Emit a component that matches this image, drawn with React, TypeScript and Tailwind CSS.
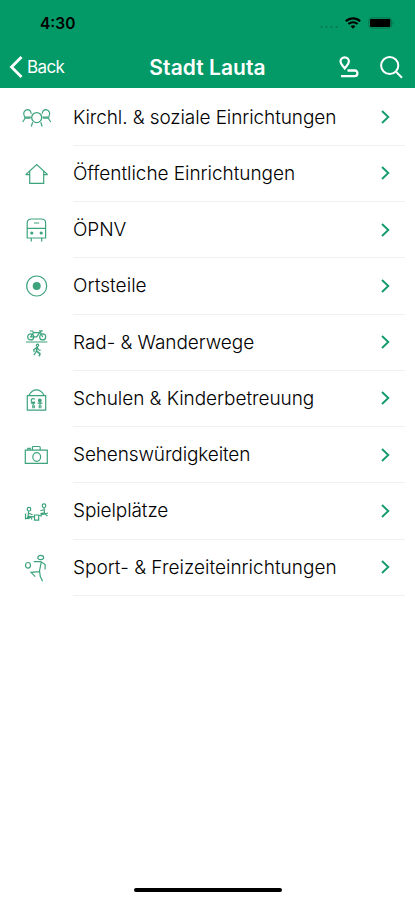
// react
import { ReactNode } from 'react';

type Category = {
  label: string;
  icon: ReactNode;
  spacing: string;
};

const categories: Category[] = [
  {
    label: 'Kirchl. & soziale Einrichtungen',
    spacing: 'tracking-[-0.1px]',
    icon: (
      <>
        <path d="M2.5 12.5C.8 9.5 2 6 5.3 5.6C7.5 5.6 9 7.5 9.2 9.8M2 13.2h7M3.2 14L.7 18M26.9 12.5c1.7-3 .5-6.5-2.8-6.9c-2.2 0-3.7 1.9-3.9 4.2M27.4 13.2h-7M26.2 14l2.5 4" />
        <circle cx="14.7" cy="13.6" r="5" strokeWidth="1.3" />
        <path d="M10.6 18.3l-1.3 4.2M18.8 18.3l1.3 4.2M3 14.2h5.5M21 14.2h5.5" />
      </>
    ),
  },
  {
    label: 'Öffentliche Einrichtungen',
    spacing: 'tracking-[-0.05px]',
    icon: <path d="M3.7 14.6L14.7 4.6L25.7 14.6M7.7 11v12.3h14V11M3.7 14.6h4M21.7 14.6h4" />,
  },
  {
    label: 'ÖPNV',
    spacing: 'tracking-[-0.1px]',
    icon: (
      <>
        <path d="M5.2 22V7c0-2.7 1.5-4 4.2-4h10c2.7 0 4.2 1.3 4.2 4v15zM5.2 12.4h18.4M12 7h5.2M9.3 22v3.4M19.7 22v3.4" />
        <circle cx="9.8" cy="17" r="1" fill="currentColor" />
        <circle cx="19.2" cy="17" r="1" fill="currentColor" />
      </>
    ),
  },
  {
    label: 'Ortsteile',
    spacing: 'tracking-[0.05px]',
    icon: (
      <>
        <circle cx="14.7" cy="14" r="10" />
        <circle cx="14.7" cy="14" r="4" fill="currentColor" stroke="none" />
      </>
    ),
  },
  {
    label: 'Rad- & Wanderwege',
    spacing: 'tracking-[-0.05px]',
    icon: (
      <>
        <circle cx="8.7" cy="7.9" r="3" />
        <circle cx="20.7" cy="7.9" r="3" />
        <path d="M8.700 7.9l2.800-4.200h6.200l-3 4.200zM11.5 3.700L10.7 2H8M20.7 7.900L17.8 1.800h3M4 13h21.4" />
        <circle cx="15.5" cy="16.3" r="1.2" />
        <path d="M15.3 18l-3.6 2.700l.5 2.300M15.3 18.5l1.300 2.300l2 .5M14.3 22.5l-2.400 3.600" />
        <path d="M15 18l-.5 4.200l3.400 2.400l-.6 2.800" strokeWidth="1.6" />
      </>
    ),
  },
  {
    label: 'Schulen & Kinderbetreuung',
    spacing: 'tracking-[-0.05px]',
    icon: (
      <>
        <path d="M5.3 10.6h18.4v14.600H5.3zM7 10.300C9 6.500 11 4.900 14.500 4.900s5.500 1.600 7.500 5.400" />
        <path d="M12.6 14.300a1.900 1.900 0 1 0 .1 2.300M8.800 18.200h4.400M11.200 17v3.200M15.600 18.200h4.800M18 17v3.200M10.800 20.200v3M12.300 20.200v3M17.300 20.200v3M18.900 20.200v3" />
        <circle cx="17.8" cy="15.4" r="1.3" fill="currentColor" />
      </>
    ),
  },
  {
    label: 'Sehenswürdigkeiten',
    spacing: 'tracking-[-0.12px]',
    icon: (
      <>
        <path d="M3.3 9.2h22v13.2h-22zM10.4 9.2V6.6c0-.8.3-1.1 1-1.1h5.8c.7 0 1 .3 1 1.1v2.6M5.8 9V7.4h2.4V9" />
        <ellipse cx="14.7" cy="16" rx="3.9" ry="4.3" />
      </>
    ),
  },
  {
    label: 'Spielplätze',
    spacing: 'tracking-[-0.1px]',
    icon: (
      <>
        <circle cx="7" cy="12.2" r="1.8" />
        <circle cx="22" cy="8.7" r="1.8" />
        <path d="M3.5 16.5v5.300l9-2.500M17 18.500l8.900-2.500M6.700 14.200l-.7 5l3.600.6v2.700M6.800 16.3l3.800 1.500M22 10.800l.5 5l-3.400.8v3.200M22 12.7l-3.600 1.100M12.5 18h4.200v5.2h-4.200zM22.500 16.500l3 2.500" />
        <circle cx="6.2" cy="20.800" r=".9" fill="currentColor" />
      </>
    ),
  },
  {
    label: 'Sport- & Freizeiteinrichtungen',
    spacing: 'tracking-[0.01px]',
    icon: (
      <>
        <ellipse cx="6" cy="11.3" rx="2.5" ry="2.8" />
        <ellipse cx="18.700" cy="3.500" rx="2.900" ry="2.100" />
        <path d="M11.700 7.600h7l4.400 3v5M19.300 8l-1.800 8.800l.8 5.700l2.300 4.700M17.500 17.600L9 18.300l4.300 4.400" />
      </>
    ),
  },
];

function StatusBar() {
  return (
    <div className="flex h-[46px] items-center justify-between pr-[20px] pl-[40px] text-black">
      <span className="pt-px text-[15.5px] leading-none font-semibold">4:30</span>
      <div className="flex items-center">
        <svg width="19" height="14" viewBox="0 0 19 14" fill="#08734f">
          <circle cx="1.5" cy="11" r="1" />
          <circle cx="6.5" cy="11" r="1" />
          <circle cx="11.5" cy="11" r="1" />
          <circle cx="16.5" cy="11" r="1" />
        </svg>
        <svg className="ml-[6px]" width="16" height="12" viewBox="0 0 16 12" fill="none" stroke="currentColor">
          <path d="M.8 4.2a10.5 10.5 0 0 1 14.4 0M3.4 7a6.8 6.8 0 0 1 9.2 0" strokeWidth="2.1" />
          <path d="M8 11.7L5.6 9.3a3.5 3.5 0 0 1 4.8 0z" fill="currentColor" stroke="none" />
        </svg>
        <svg className="ml-[7px]" width="27" height="12" viewBox="0 0 27 12">
          <rect x=".8" y=".9" width="22.7" height="10.2" rx="2.5" fill="none" stroke="#08734f" />
          <rect x="2" y="2" width="20.3" height="8" rx="1.2" fill="#000" />
          <path d="M24.6 4v4c1.5-.6 1.5-3.4 0-4z" fill="#08734f" />
        </svg>
      </div>
    </div>
  );
}

function NavBar() {
  return (
    <div className="grid h-[42px] grid-cols-[1fr_auto_1fr] items-center text-white">
      <button className="flex items-center pl-[9px]">
        <svg width="14" height="22" viewBox="0 0 14 22" fill="none" stroke="currentColor" strokeWidth="2.8">
          <path d="M12.5 1L2.5 11l10 10" />
        </svg>
        <span className="ml-1 text-[17px] leading-none tracking-[-0.6px]">Back</span>
      </button>
      <h1 className="text-[21px] leading-none font-semibold tracking-[0.05px]">Stadt Lauta</h1>
      <div className="flex items-center justify-end pr-[12px]">
        <button aria-label="Route">
          <svg width="20" height="22" viewBox="0 0 20 22" fill="none" stroke="currentColor" strokeWidth="2.2">
            <path d="M5.7 12.4C3.5 9.5 1.5 7.8 1.5 5.5a4.2 4.2 0 0 1 8.4 0c0 2.3-2 4-4.2 6.9z" />
            <path d="M8.5 14.5h7.3c3.6 0 3.4 5.6 0 5.6H2" strokeWidth="2.3" />
          </svg>
        </button>
        <button aria-label="Suche" className="ml-[20px]">
          <svg width="24" height="24" viewBox="0 0 24 24" fill="none" stroke="currentColor" strokeWidth="2">
            <circle cx="10.7" cy="10.5" r="8.6" />
            <path d="M17 16.8l6 6" />
          </svg>
        </button>
      </div>
    </div>
  );
}

function CategoryRow({ category }: { category: Category }) {
  return (
    <li className="flex h-[56.25px] pl-[22px]">
      <svg
        className="mt-[14px] shrink-0 overflow-visible text-[#3da37d]"
        width="28"
        height="28"
        viewBox="0 0 28 28"
        fill="none"
        stroke="currentColor"
        strokeWidth="1.2">
        {category.icon}
      </svg>
      <div className="mr-[10px] ml-[23px] flex flex-1 items-center justify-between border-b border-[#f0f0f0] pr-[14px]">
        <span className={`text-[19px] leading-none font-light whitespace-nowrap text-black ${category.spacing}`}>
          {category.label}
        </span>
        <svg width="11" height="14" viewBox="0 0 11 14" fill="none" stroke="#139c6b" strokeWidth="1.9">
          <path d="M2 1l6.3 6L2 13" />
        </svg>
      </div>
    </li>
  );
}

export default function App() {
  return (
    <div className="flex h-[900px] w-[415px] flex-col bg-white font-['Inter',sans-serif]">
      <header className="h-[88px] bg-[#049a67]">
        <StatusBar />
        <NavBar />
      </header>
      <ul className="flex-1 pt-[1.5px]">
        {categories.map((category) => (
          <CategoryRow key={category.label} category={category} />
        ))}
      </ul>
      <div className="mx-auto mb-[8px] h-[4px] w-[148px] rounded-full bg-black" />
    </div>
  );
}
